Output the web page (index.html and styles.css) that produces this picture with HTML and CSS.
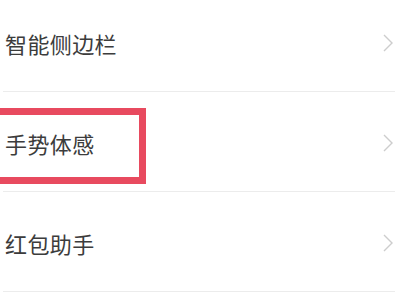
FILE: index.html
```html
<!DOCTYPE html>
<html lang="zh-CN">
<head>
    <meta charset="UTF-8">
    <meta name="viewport" content="width=device-width, initial-scale=1.0">
    <title>设置</title>
    <link rel="stylesheet" href="styles.css">
</head>
<body>

<div class="list">
    <div class="item">
        <span class="label">智能侧边栏</span>
        <svg class="arrow" width="12" height="20" viewBox="0 0 12 20"><polyline points="2,2 10,10 2,18" fill="none" stroke="#cdcdcd" stroke-width="1.4"/></svg>
    </div>

    <div class="item">
        <span class="label">手势体感</span>
        <svg class="arrow" width="12" height="20" viewBox="0 0 12 20"><polyline points="2,2 10,10 2,18" fill="none" stroke="#cdcdcd" stroke-width="1.4"/></svg>
        <div class="highlight"></div>
    </div>

    <div class="item">
        <span class="label">红包助手</span>
        <svg class="arrow" width="12" height="20" viewBox="0 0 12 20"><polyline points="2,2 10,10 2,18" fill="none" stroke="#cdcdcd" stroke-width="1.4"/></svg>
    </div>
</div>

</body>
</html>
```

FILE: styles.css
```css
body {
    margin: 0;
    background: #fff;
    font-family: "Noto Sans CJK SC", "Noto Sans", sans-serif;
    overflow: hidden;
}
.list {
    margin-top: -8px;
}
.item {
    position: relative;
    display: flex;
    justify-content: space-between;
    align-items: center;
    height: 99px;
    margin: 0 5px 0 3px;
    padding: 3px 0 0 2px;
    box-sizing: border-box;
    height: 100px;
    border-bottom: 1px solid #ececec;
}
.label {
    font-size: 22px;
    color: #3c3c3c;
    letter-spacing: 0.4px;
}
.arrow {
    margin-right: 1px;
}
.highlight {
    position: absolute;
    left: -12px;
    top: 16px;
    width: 141px;
    height: 62px;
    border: 7px solid #e84a5f;
}
```
